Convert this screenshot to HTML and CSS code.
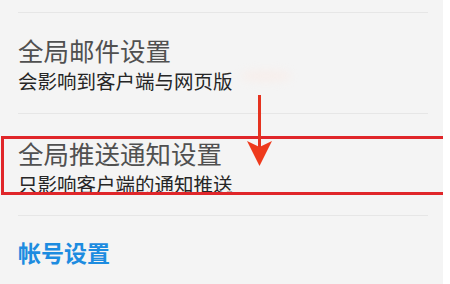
FILE: index.html
```html
<!DOCTYPE html>
<html lang="zh-CN">
<head>
<meta charset="utf-8">
<title>设置</title>
<link rel="stylesheet" href="styles.css">
</head>
<body>
<div class="screen">
  <div class="list">
    <div class="divider first"></div>
    <div class="item item-mail">
      <div class="item-title">全局邮件设置</div>
      <div class="item-sub">会影响到客户端与网页版</div>
    </div>
    <div class="divider"></div>
    <div class="item item-push">
      <div class="item-title">全局推送通知设置</div>
      <div class="item-sub">只影响客户端的通知推送</div>
    </div>
    <div class="divider"></div>
    <div class="section-title">帐号设置</div>
  </div>
  <div class="glow"></div>
  <div class="highlight-box"></div>
  <svg class="arrow" width="450" height="284" viewBox="0 0 450 284" aria-hidden="true">
    <line x1="259.5" y1="95" x2="259.5" y2="150" stroke="#e5321f" stroke-width="3"/>
    <polygon points="247,141 259.5,147 272,141 259.5,166" fill="#ee3a1c"/>
  </svg>
</div>
</body>
</html>
```
FILE: styles.css
```css
html, body {
  margin: 0;
  padding: 0;
  background: #ffffff;
}
.screen {
  position: relative;
  width: 443px;
  height: 284px;
  overflow: hidden;
  background: #f4f4f4;
  font-family: "Noto Sans CJK SC", "Noto Sans", sans-serif;
}
.list {
  padding: 0 15px 0 18px;
}
.divider {
  height: 1px;
  background: #e6e6e6;
}
.divider.first {
  margin-top: 12px;
}
.item-mail {
  padding: 21px 0 17px;
}
.item-push {
  padding: 22px 0 16px;
}
.item-title {
  font-size: 25.5px;
  line-height: 32px;
  color: #505050;
  white-space: nowrap;
}
.item-push .item-title {
  line-height: 33px;
}
.item-sub {
  font-size: 19.5px;
  line-height: 30px;
  color: #262626;
  white-space: nowrap;
}
.section-title {
  margin-top: 21px;
  font-size: 23px;
  line-height: 30px;
  font-weight: 700;
  color: #1d8ce0;
}
.glow {
  position: absolute;
  left: 240px;
  top: 70px;
  width: 52px;
  height: 12px;
  border-radius: 50%;
  background: #fbe8e2;
  filter: blur(4px);
  opacity: 0.45;
}
.highlight-box {
  position: absolute;
  left: 1px;
  top: 136px;
  width: 440px;
  height: 53px;
  border-top: 3px solid #e0262a;
  border-bottom: 3px solid #e0262a;
  border-left: 3px solid #e0262a;
  border-right: 1px solid #ec8a8a;
}
.arrow {
  position: absolute;
  left: 0;
  top: 0;
}
```
